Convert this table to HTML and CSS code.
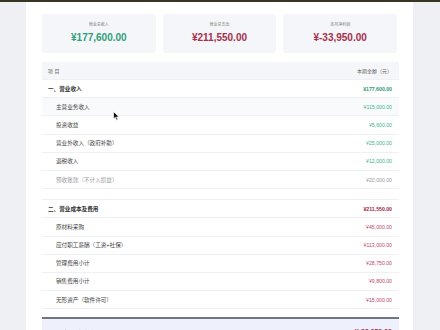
FILE: index.html
```html
<!DOCTYPE html>
<html lang="zh">
<head>
<meta charset="utf-8">
<link rel="stylesheet" href="styles.css">
</head>
<body>
<div class="topbar"></div>
<main class="sheet">
  <section class="cards">
    <div class="card"><div class="card-label">营业总收入</div><div class="card-value pos">¥177,600.00</div></div>
    <div class="card"><div class="card-label">营业总支出</div><div class="card-value neg">¥211,550.00</div></div>
    <div class="card"><div class="card-label">本月净利润</div><div class="card-value neg">¥-33,950.00</div></div>
  </section>
  <section class="table">
    <div class="row head"><span>项 目</span><span>本期金额（元）</span></div>
    <div class="row section"><span>一、营业收入</span><span class="amt pos-strong">¥177,600.00</span></div>
    <div class="row sub hover"><span>主营业务收入</span><span class="amt pos">¥115,000.00</span></div>
    <div class="row sub"><span>投资收益</span><span class="amt pos">¥5,600.00</span></div>
    <div class="row sub"><span>营业外收入（政府补助）</span><span class="amt pos">¥25,000.00</span></div>
    <div class="row sub"><span>退税收入</span><span class="amt pos">¥12,000.00</span></div>
    <div class="row sub muted"><span>预收账款（不计入损益）</span><span class="amt">¥20,000.00</span></div>
    <div class="spacer"></div>
    <div class="row section"><span>二、营业成本及费用</span><span class="amt neg-strong">¥211,550.00</span></div>
    <div class="row sub"><span>原材料采购</span><span class="amt neg">¥45,000.00</span></div>
    <div class="row sub"><span>应付职工薪酬（工资+社保）</span><span class="amt neg">¥113,000.00</span></div>
    <div class="row sub"><span>管理费用小计</span><span class="amt neg">¥28,750.00</span></div>
    <div class="row sub"><span>销售费用小计</span><span class="amt neg">¥9,800.00</span></div>
    <div class="row sub"><span>无形资产（软件许可）</span><span class="amt neg">¥15,000.00</span></div>
    <div class="spacer last"></div>
    <div class="row total"><span>三、本月净利润</span><span class="amt neg-strong">¥-33,950.00</span></div>
  </section>
</main>
<svg class="cursor" width="7" height="10" viewBox="0 0 7 10"><path d="M0.5 0.5 L0.5 8 L2.3 6.3 L3.6 9.3 L4.8 8.8 L3.6 5.9 L6 5.9 Z" fill="#111" stroke="#fff" stroke-width="0.7"/></svg>
</body>
</html>
```

FILE: styles.css
```css
* { box-sizing: border-box; margin: 0; padding: 0; }
html, body { height: 100%; }
body {
  background: #eef0f4;
  font-family: "Liberation Sans", "Noto Sans CJK SC", sans-serif;
  color: #333;
  overflow: hidden;
  position: relative;
}
.topbar { height: 2px; background: #3b3424; }
.sheet {
  width: 387px;
  margin-left: 26px;
  background: #fff;
  padding: 12px 14px 0 16px;
  min-height: 328px;
}
.cards {
  display: grid;
  grid-template-columns: repeat(3, 1fr);
  gap: 7px;
  margin-right: 2px;
}
.card {
  background: #f5f6f9;
  border-radius: 3px;
  height: 39px;
  display: flex;
  flex-direction: column;
  align-items: center;
  padding-top: 8px;
}
.card-label { font-size: 4px; line-height: 6px; color: #777; }
.card-value { font-size: 10px; line-height: 12px; font-weight: 700; margin-top: 4px; }
.card-value.pos { color: #2f9f78; }
.card-value.neg { color: #a52f4b; }

.table { margin-top: 9px; }
.row {
  display: flex;
  justify-content: space-between;
  align-items: center;
  height: 18.2px;
  padding: 0 7px 0 6px;
  border-bottom: 1px solid #eff0f3;
  font-size: 5.6px;
  color: #444;
}
.row.head { height: 18px; background: #f5f6f9; color: #666; font-size: 5px; }
.row.section { font-weight: 700; color: #333; }
.row.sub { padding-left: 14px; background: #fff; }
.row.sub.hover { background: #f9fafb; }
.row.muted { color: #999; }
.row.muted .amt { color: #999; }
.amt { font-size: 5.2px; }
.pos-strong { color: #2a9b73; }
.pos { color: #3cb48a; }
.neg-strong { color: #9f2847; }
.neg { color: #c0466b; }
.spacer { height: 11px; border-bottom: 1px solid #eff0f3; }
.spacer.last { height: 10px; border-bottom: 2px solid #6f7680; }
.row.total { background: #eef0fb; height: 20px; font-size: 7px; font-weight: 700; padding-top: 9px; align-items: flex-start; }
.row.total .amt { font-size: 7px; }
.cursor { position: absolute; left: 113px; top: 111px; }
```
